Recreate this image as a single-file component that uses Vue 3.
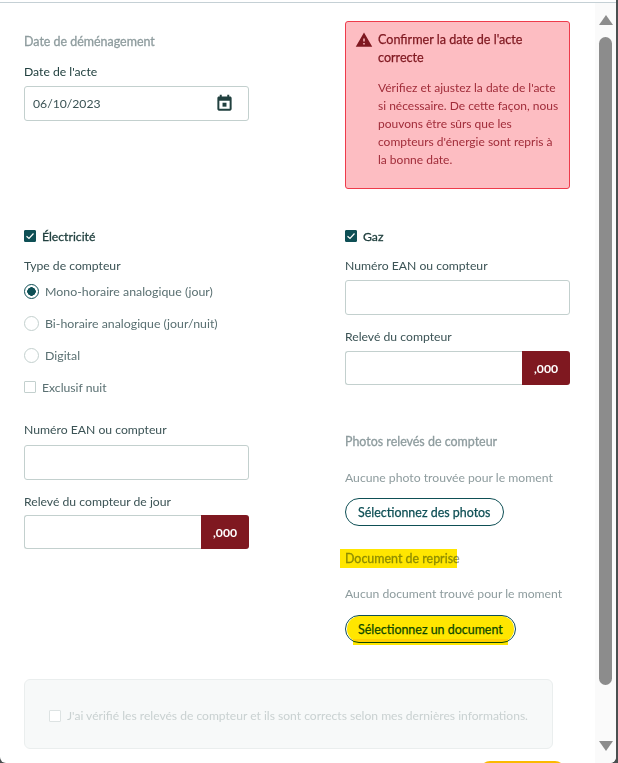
<script setup>
const radios = [
  { label: 'Mono-horaire analogique (jour)', on: true },
  { label: 'Bi-horaire analogique (jour/nuit)', on: false },
  { label: 'Digital', on: false }
]
</script>

<template>
  <div class="shot">
    <div class="modal">
      <div class="rule"></div>
      <div class="body">
        <main class="content">
          <section class="grid top">
            <div>
              <h3 class="heading">Date de déménagement</h3>
              <div class="label">Date de l'acte</div>
              <div class="input date">
                <span>06/10/2023</span>
                <svg width="19" height="19" viewBox="0 0 24 24" fill="#21403f"><path fill-rule="evenodd" d="M6 1h2.500v2h7V1H18v2h1c1.100 0 2 .9 2 2v14c0 1.100-.9 2-2 2H5c-1.100 0-2-.9-2-2V5c0-1.100.9-2 2-2h1V1zM5.500 8.500v10h13v-10h-13z"/><path d="M9.500 11h5v5h-5z"/></svg>
              </div>
            </div>
            <aside class="alert">
              <svg class="warn" width="18" height="18" viewBox="0 0 24 24" fill="#7f1820"><path d="M1 21h22L12 2 1 21zm12-3h-2v-2h2v2zm0-4h-2v-4h2v4z"/></svg>
              <div>
                <div class="alert-title">Confirmer la date de l'acte correcte</div>
                <p class="alert-text">Vérifiez et ajustez la date de l'acte si nécessaire. De cette façon, nous pouvons être sûrs que les compteurs d'énergie sont repris à la bonne date.</p>
              </div>
            </aside>
          </section>

          <section class="grid meters">
            <div>
              <div class="check-title">
                <span class="box on"><svg width="10" height="10" viewBox="0 0 10 10" fill="none" stroke="#fff" stroke-width="1.2"><path d="M1.500 5.200 4 7.500 8.500 2.500"/></svg></span>
                Électricité
              </div>
              <div class="label type-label">Type de compteur</div>
              <div v-for="r in radios" :key="r.label" class="radio-row">
                <span class="radio" :class="{ on: r.on }"></span>
                <span>{{ r.label }}</span>
              </div>
              <div class="exclusive"><span class="box"></span>Exclusif nuit</div>

              <div class="label ean-left">Numéro EAN ou compteur</div>
              <div class="input"></div>
              <div class="label reading-label">Relevé du compteur de jour</div>
              <div class="input-group">
                <div class="input grow"></div>
                <div class="suffix">,000</div>
              </div>
            </div>

            <div>
              <div class="check-title">
                <span class="box on"><svg width="10" height="10" viewBox="0 0 10 10" fill="none" stroke="#fff" stroke-width="1.2"><path d="M1.500 5.200 4 7.500 8.500 2.500"/></svg></span>
                Gaz
              </div>
              <div class="label type-label">Numéro EAN ou compteur</div>
              <div class="input"></div>
              <div class="label reading-label right-reading">Relevé du compteur</div>
              <div class="input-group">
                <div class="input grow"></div>
                <div class="suffix">,000</div>
              </div>

              <h3 class="heading photos">Photos relevés de compteur</h3>
              <div class="muted">Aucune photo trouvée pour le moment</div>
              <button class="pill">Sélectionnez des photos</button>

              <div class="doc-head">
                <h3 class="heading">Document de reprise</h3>
                <span class="mark mark-head"></span>
              </div>
              <div class="muted doc-muted">Aucun document trouvé pour le moment</div>
              <div class="doc-btn">
                <button class="pill">Sélectionnez un document</button>
                <span class="mark mark-btn"></span>
                <span class="mark mark-under"></span>
              </div>
            </div>
          </section>

          <section class="confirm">
            <span class="box faded"></span>
            <span>J'ai vérifié les relevés de compteur et ils sont corrects selon mes dernières informations.</span>
          </section>
          <div class="next"></div>
        </main>

        <div class="scrollbar">
          <span class="arrow up"></span>
          <span class="thumb"></span>
          <span class="arrow down"></span>
        </div>
      </div>
    </div>
  </div>
</template>

<style>
html, body { margin: 0; background: #fff; }
</style>

<style scoped>
.shot {
  width: 618px;
  height: 763px;
  overflow: hidden;
  background: #4a4f50;
  font-family: Lato, "Noto Sans", sans-serif;
  font-size: 12.2px;
  color: #3b5355;
}
.modal {
  display: flex;
  flex-direction: column;
  width: 616px;
  height: 763px;
  background: #fff;
  border-radius: 0 0 6px 6px;
  overflow: hidden;
}
.rule {
  flex: none;
  height: 1px;
  margin-top: 2px;
  background: #c5d0d5;
}
.body { flex: 1; min-height: 0; display: flex; }
.content {
  flex: 1;
  min-width: 0;
  padding: 0 24px;
  overflow: hidden;
}
.grid {
  display: grid;
  grid-template-columns: 225px 225px;
  column-gap: 96px;
}
.top { padding-top: 18px; height: 223px; box-sizing: border-box; }
.heading {
  margin: 0;
  font-size: 12.45px;
  line-height: 18px;
  font-weight: 400;
  -webkit-text-stroke: 0.3px currentColor;
  color: #8e9c9e;
}
.top .heading { margin-top: 12px; }
.label { line-height: 18px; color: #3b5355; }
.top .label { margin-top: 12px; color: #21403f; }
.input {
  box-sizing: border-box;
  height: 35px;
  border: 1px solid #c3d0ce;
  border-radius: 3px;
  background: #fff;
}
.date {
  display: flex;
  align-items: center;
  justify-content: space-between;
  margin-top: 5px;
  padding: 0 14px 0 8px;
  color: #3b5355;
}
.alert {
  box-sizing: border-box;
  height: 168px;
  display: flex;
  gap: 5px;
  padding: 9px 10px 0 9px;
  background: #fdbdc2;
  border: 1px solid #ee3b4b;
  border-radius: 3px;
  color: #a12d3a;
  line-height: 18px;
}
.warn { flex: none; }
.alert-title {
  color: #7f1820;
  font-size: 12.6px;
  -webkit-text-stroke: 0.25px currentColor;
}
.alert-text { margin: 12px 0 0; font-size: 12px; }
.check-title {
  display: flex;
  align-items: center;
  gap: 6px;
  height: 20px;
  color: #21403f;
  -webkit-text-stroke: 0.3px currentColor;
}
.box {
  flex: none;
  box-sizing: border-box;
  width: 12px;
  height: 12px;
  display: inline-flex;
  align-items: center;
  justify-content: center;
  border: 1px solid #c3d0ce;
  border-radius: 1px;
  background: #fff;
  -webkit-text-stroke: 0;
}
.box.on { background: #0e4f55; border-color: #0e4f55; }
.type-label { margin-top: 11px; }
.radio-row {
  display: flex;
  align-items: center;
  gap: 6px;
  height: 32px;
  color: #5a7072;
  font-size: 12.35px;
}
.radio-row:first-of-type { margin-top: 1px; }
.radio {
  flex: none;
  box-sizing: border-box;
  width: 15px;
  height: 15px;
  border: 1px solid #c3d0ce;
  border-radius: 50%;
  background: #fff;
}
.radio.on {
  border: 1.500px solid #0e4f55;
  background: radial-gradient(circle, #0e4f55 0 4px, #fff 4.500px);
}
.exclusive {
  display: flex;
  align-items: center;
  gap: 6px;
  height: 32px;
  color: #5a7072;
}
.ean-left { margin-top: 18px; margin-bottom: 6px; }
.type-label + .input { margin-top: 5px; }
.reading-label { margin-top: 13px; margin-bottom: 4px; }
.right-reading { margin-bottom: 5px; }
.input-group { display: flex; height: 34px; }
.grow { flex: 1; height: 34px; border-right: 0; border-radius: 3px 0 0 3px; }
.suffix {
  width: 48px;
  display: flex;
  align-items: center;
  justify-content: center;
  background: #7f1820;
  color: #fff;
  font-weight: 700;
  border-radius: 0 3px 3px 0;
}
.photos { margin-top: 48px; }
.muted { margin-top: 18px; line-height: 18px; color: #8e9c9e; }
.pill {
  display: block;
  margin-top: 11px;
  height: 28px;
  padding: 0 12px;
  border: 1px solid #0e4f55;
  border-radius: 14px;
  background: #fff;
  color: #0e4f55;
  font: 400 12.45px Lato, "Noto Sans", sans-serif;
  -webkit-text-stroke: 0.25px currentColor;
}
.doc-head { position: relative; margin-top: 24px; }
.doc-muted { margin-top: 17px; }
.doc-btn { position: relative; margin-top: 12px; }
.doc-btn .pill { margin-top: 0; }
.mark {
  position: absolute;
  background: #ffe600;
  mix-blend-mode: multiply;
}
.mark-head { left: -5px; top: -1px; width: 117px; height: 19px; }
.mark-btn { left: 2px; top: 1px; width: 167px; height: 26px; border-radius: 13px; }
.mark-under { left: 8px; top: 24px; width: 155px; height: 6px; }
.confirm {
  box-sizing: border-box;
  display: flex;
  align-items: center;
  gap: 6px;
  width: 529px;
  height: 70px;
  margin-top: 36px;
  padding: 3px 24px 0;
  background: #f7f9f9;
  border: 1px solid #eaeeee;
  border-radius: 6px;
  color: #c9d1d1;
  font-size: 12.08px;
  white-space: nowrap;
}
.faded { border-color: #dde3e3; }
.next {
  width: 85px;
  height: 10px;
  margin: 12px 0 0 456px;
  background: #fbb900;
  border-radius: 14px 14px 0 0;
}
.scrollbar {
  flex: none;
  width: 21px;
  background: #fafafa;
  display: flex;
  flex-direction: column;
  align-items: center;
  padding-top: 12px;
}
.thumb {
  width: 13px;
  height: 648px;
  margin-top: 12px;
  background: #8c8c8c;
  border-radius: 7px;
}
.arrow { width: 0; height: 0; border-left: 7px solid transparent; border-right: 7px solid transparent; }
.up { border-bottom: 10px solid #8c8c8c; }
.down { margin-top: 56px; border-top: 10px solid #8c8c8c; }
</style>
